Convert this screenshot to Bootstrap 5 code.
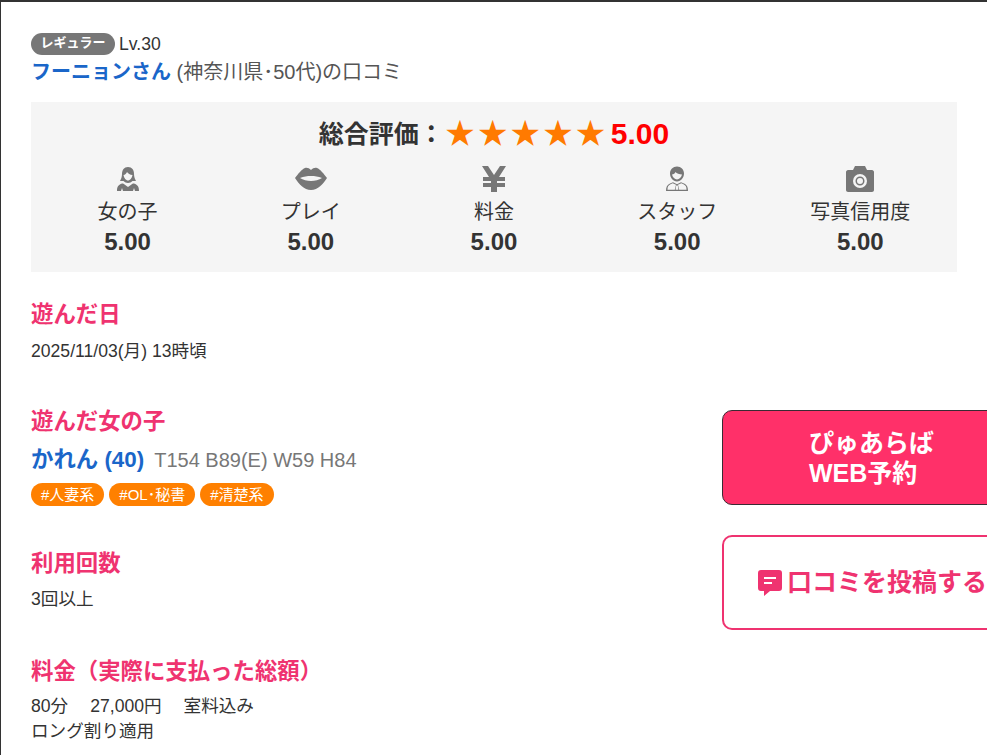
<!DOCTYPE html>
<html lang="ja">
<head>
<meta charset="utf-8">
<title>口コミ</title>
<link href="https://cdn.jsdelivr.net/npm/bootstrap@5.3.0/dist/css/bootstrap.min.css" rel="stylesheet">
<style>
html,body{height:755px;overflow:hidden}
body{font-family:"Liberation Sans","Noto Sans CJK JP",sans-serif;color:#333;font-size:17.6px;line-height:25px;background:#fff}
.frame{border-top:2px solid #333;border-left:1px solid #333;height:755px;padding:30px 30px 0;width:987px;overflow:hidden}
.rank-line{height:24px;font-size:17.6px;line-height:24px}
.rank-pill{background:#777;color:#fff;font-size:13px;font-weight:700;border-radius:11px;height:22px;line-height:20px;width:84px;text-align:center;margin-right:4px}
.who-line{font-size:20px;line-height:26px;color:#555;margin-top:3px}
.who-name{color:#1a66c9;font-weight:700;font-size:20px}
.score-box{background:#f5f5f5;height:170px;margin-top:17px;padding:0 5px;width:926px}
.score-total{font-size:25px;font-weight:700;height:64px;line-height:64px}
.score-star{color:#ff7a00;font-size:29px;line-height:1;width:32.600px;text-align:center}
.score-red{color:#f00;font-size:30px;margin-left:4px}
.score-cell{width:20%;text-align:center}
.score-ico{height:32px;padding-bottom:6px;display:flex;align-items:center;justify-content:center;fill:#777}
.score-lab{font-size:20px;line-height:28px;color:#333}
.score-num{font-size:24px;font-weight:700;line-height:32px}
.sec-title{color:#ef3370;font-size:22.400px;font-weight:700;line-height:30px;margin:0}
.sec-text{font-size:17.6px;line-height:25px;margin:0}
.girl-name{color:#1a66c9;font-size:22.400px;font-weight:700}
.girl-spec{color:#777;font-size:20px;margin-left:10px}
.tag-row{gap:5px;margin-top:7px}
.tag-pill{background:#ff8000;color:#fff;font-size:15px;height:23px;line-height:23px;padding:0 10px;border-radius:12px}
.fee-item{margin-right:22px}
.main-col{width:691px;flex:none;margin-top:-3px}
.side-col{width:300px;flex:none}
.btn-reserve{background:#ff3069;border:1px solid #3a2a33;border-radius:10px;color:#fff;font-size:25px;font-weight:700;line-height:30px;height:95px;padding:17px 0 0 86px;display:block}
.btn-post{border:2px solid #ef3370;border-radius:10px;color:#ef3370;background:#fff;font-size:25px;font-weight:700;height:95px;margin-top:30px;padding-left:33px}
.sec-first{margin-top:28px}
.sec-date{margin-top:9px}
.two-col{margin-top:46px;width:1013px}
.girl-line{line-height:30px;margin-top:8px}
.sec-count{margin-top:43px}
.sec-under{margin-top:8px}
.sec-price{margin-top:45px}
.sec-fee{margin-top:7px}
</style>
</head>
<body>
<div class="frame">
  <div class="rank-line d-flex align-items-center"><span class="rank-pill">レギュラー</span><span>Lv.30</span></div>
  <div class="who-line"><a class="who-name text-decoration-none" href="#">フーニョンさん</a> (神奈川県･50代)の口コミ</div>

  <div class="score-box">
    <div class="score-total d-flex justify-content-center align-items-center">
      <span>総合評価：</span><span class="d-flex"><span class="score-star">★</span><span class="score-star">★</span><span class="score-star">★</span><span class="score-star">★</span><span class="score-star">★</span></span><span class="score-red">5.00</span>
    </div>
    <div class="d-flex">
      <div class="score-cell">
        <div class="score-ico"><svg width="24" height="26" viewBox="0 0 24 26"><path fill-rule="evenodd" d="M12 1c4 0 6 3 6 7 0 3 1 5 2 7h-3.500c-1 1-3 2-4.500 2s-3.500-1-4.500-2H4c1-2 2-4 2-7 0-4 2-7 6-7zM7.500 9c.5 3 2.500 5.500 4.500 5.500S16 12 16.500 9C14 9 12 7.500 11 6c-.5 1.500-2 3-3.500 3zM1 25c0-4 1-6 5-7.500.5-.2 1 0 1.500.3L12 21l4.500-3.200c.5-.3 1-.5 1.500-.3 4 1.500 5 3.500 5 7.500H19l-1-3-1 3H7l-1-3-1 3z"/></svg></div>
        <div class="score-lab">女の子</div><div class="score-num">5.00</div>
      </div>
      <div class="score-cell">
        <div class="score-ico"><svg width="32" height="24" viewBox="0 0 32 24"><path fill-rule="evenodd" d="M0 11C3 7 7 2 10 1c2-.5 4 0 6 2 2-2 4-2.500 6-2 3 1 7 6 10 10-4 6-9 12-16 12S4 17 0 11zm5 0c3 2 7 3 11 3s8-1 11-3c-4-1.500-7-2-11-2s-7 .5-11 2z"/></svg></div>
        <div class="score-lab">プレイ</div><div class="score-num">5.00</div>
      </div>
      <div class="score-cell">
        <div class="score-ico"><svg width="24" height="26" viewBox="0 0 24 26"><path d="M0 0h6l6 9 6-9h6l-7 11h6v4h-8v2h8v4h-8v5H9v-5H1v-4h8v-2H1v-4h6z"/></svg></div>
        <div class="score-lab">料金</div><div class="score-num">5.00</div>
      </div>
      <div class="score-cell">
        <div class="score-ico"><svg width="24" height="26" viewBox="0 0 24 26"><path fill-rule="evenodd" d="M12 .5c4 0 7 3 7 7s-3 8-7 8-7-4-7-8 3-7 7-7zM7 8.500c.6 2.800 2.800 5 5 5s4.400-2.200 5-5c-2.500-.2-5.500-1-6.500-2.500C10 7.300 8.500 8.300 7 8.500zM1 25c0-4 1-6 4-7.500l3-1.300 4 2 4-2 3 1.300c3 1.500 4 3.500 4 7.500zm1.500-1.300h7.300L11 18.800 7.700 17.300 5.500 18.300c-2.300 1-3 2.700-3 5.400zm11.700 0h7.300c0-2.700-.7-4.400-3-5.400l-2.200-1L13 18.800zM11.200 19.500l-.6 4.200h2.800l-.6-4.200z"/></svg></div>
        <div class="score-lab">スタッフ</div><div class="score-num">5.00</div>
      </div>
      <div class="score-cell">
        <div class="score-ico"><svg width="28" height="26" viewBox="0 0 28 26"><path fill-rule="evenodd" d="M9 0h10l2 4h5c1 0 2 1 2 2v18c0 1-1 2-2 2H2c-1 0-2-1-2-2V6c0-1 1-2 2-2h5zm5 8a7 7 0 1 0 0 14 7 7 0 0 0 0-14zm0 2.500a4.500 4.500 0 1 1 0 9 4.500 4.500 0 0 1 0-9zm0 1.500a3 3 0 1 0 0 6 3 3 0 0 0 0-6z"/></svg></div>
        <div class="score-lab">写真信用度</div><div class="score-num">5.00</div>
      </div>
    </div>
  </div>

  <h3 class="sec-title sec-first">遊んだ日</h3>
  <p class="sec-text sec-date">2025/11/03(月) 13時頃</p>

  <div class="d-flex two-col">
    <div class="main-col">
      <h3 class="sec-title">遊んだ女の子</h3>
      <div class="girl-line"><a class="girl-name text-decoration-none" href="#">かれん (40)</a><span class="girl-spec">T154 B89(E) W59 H84</span></div>
      <div class="d-flex tag-row"><span class="tag-pill">#人妻系</span><span class="tag-pill">#OL･秘書</span><span class="tag-pill">#清楚系</span></div>
      <h3 class="sec-title sec-count">利用回数</h3>
      <p class="sec-text sec-under">3回以上</p>
      <h3 class="sec-title sec-price">料金（実際に支払った総額）</h3>
      <p class="sec-text sec-fee"><span class="fee-item">80分</span><span class="fee-item">27,000円</span><span>室料込み</span><br>ロング割り適用</p>
    </div>
    <div class="side-col">
      <a class="btn-reserve text-decoration-none" href="#">ぴゅあらば<br>WEB予約</a>
      <a class="btn-post text-decoration-none d-flex align-items-center" href="#"><svg class="me-1" width="26" height="27" viewBox="0 0 26 27" fill="#ef3370"><path fill-rule="evenodd" d="M4 1h18c2 0 3 1 3 3v15c0 2-1 3-3 3h-9l-6 5v-5H4c-2 0-3-1-3-3V4c0-2 1-3 3-3zm3 7v2h12V8zm0 5v2h8v-2z"/></svg><span>口コミを投稿する</span></a>
    </div>
  </div>
</div>
</body>
</html>
